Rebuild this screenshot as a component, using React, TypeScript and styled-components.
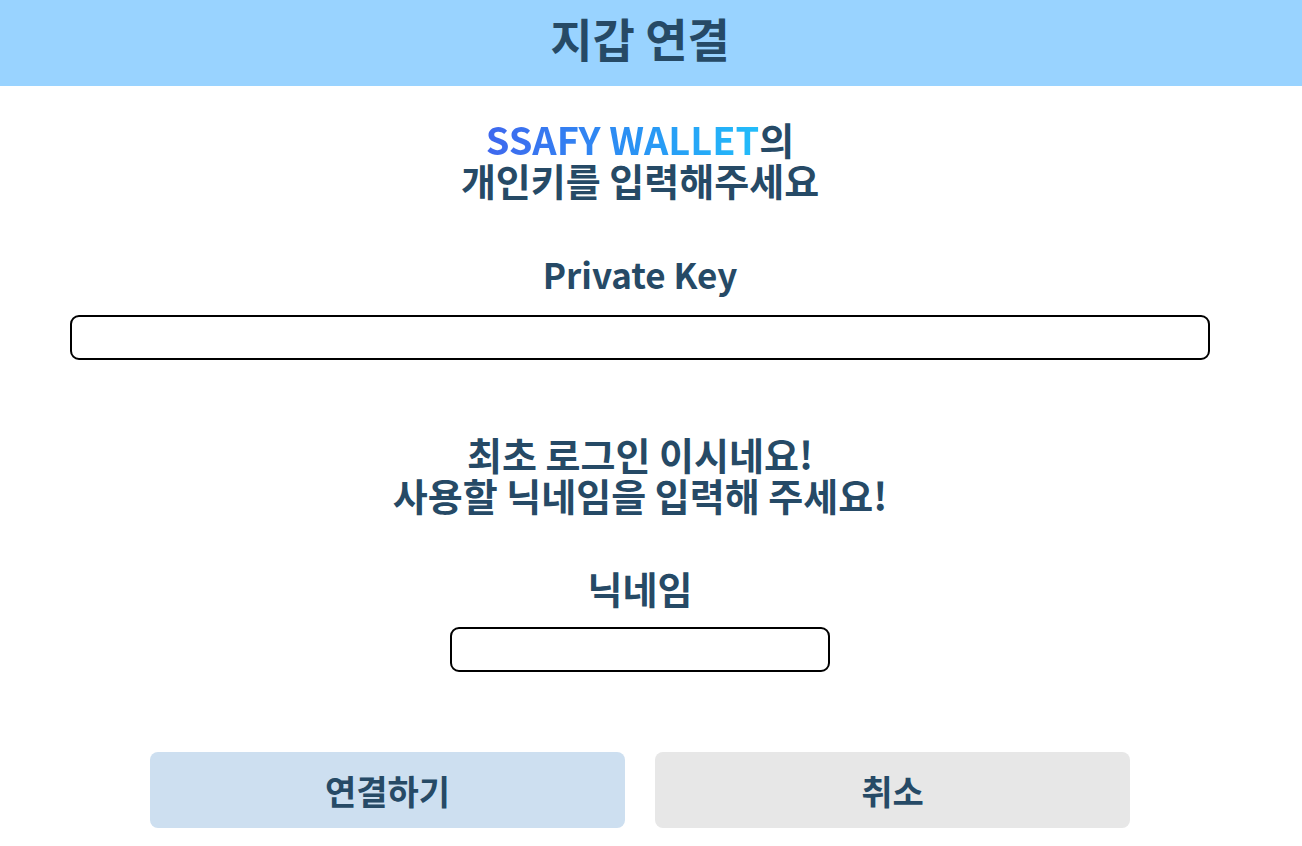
import React from "react";
import styled, { createGlobalStyle } from "styled-components";

const Global = createGlobalStyle`
  html, body { margin: 0; padding: 0; background: #ffffff; }
  body { font-family: "Noto Sans CJK KR", "Noto Sans", sans-serif; color: #264a66; }
  * { box-sizing: border-box; }
`;

const Header = styled.header`
  height: 86px;
  background: #99d3ff;
  width: 100%;
`;

const Frame = styled.div`
  width: 1280px;
  display: flex;
  flex-direction: column;
  align-items: center;
`;

const HeaderInner = styled(Frame)`
  height: 100%;
  justify-content: center;
  padding-bottom: 12px;
`;

const Title = styled.h1`
  margin: 0;
  font-size: 46px;
  font-weight: 700;
  color: #264a66;
  line-height: 1;
`;

const Main = styled(Frame)`
  padding-top: 32px;
`;

const Heading = styled.h2<{ $top?: number }>`
  margin: ${(p) => p.$top ?? 0}px 0 0;
  font-size: 38px;
  font-weight: 700;
  line-height: 41px;
  text-align: center;
  color: #264a66;
`;

const Gradient = styled.span`
  background: linear-gradient(90deg, #3f67ee 0%, #2a93f4 55%, #22bdfa 100%);
  -webkit-background-clip: text;
  background-clip: text;
  color: transparent;
`;

const Label = styled.label<{ $top: number; $size: number }>`
  margin-top: ${(p) => p.$top}px;
  font-size: ${(p) => p.$size}px;
  font-weight: 700;
  line-height: 40px;
  color: #264a66;
`;

const Input = styled.input<{ $width: number; $top: number }>`
  display: block;
  margin-top: ${(p) => p.$top}px;
  width: ${(p) => p.$width}px;
  height: 45px;
  border: 2px solid #000;
  border-radius: 9px;
  background: #fff;
  outline: none;
`;

const Buttons = styled.div`
  margin-top: 80px;
  display: flex;
  gap: 30px;
`;

const Button = styled.button<{ $bg: string }>`
  width: 475px;
  height: 76px;
  border: none;
  border-radius: 8px;
  background: ${(p) => p.$bg};
  font-family: "Noto Sans CJK KR", sans-serif;
  font-size: 34px;
  font-weight: 700;
  color: #264a66;
  padding: 0;
`;

export default function App() {
  return (
    <>
      <Global />
      <Header>
        <HeaderInner>
          <Title>지갑 연결</Title>
        </HeaderInner>
      </Header>
      <Main>
        <Heading>
          <Gradient>SSAFY WALLET</Gradient>의
          <br />
          개인키를 입력해주세요
        </Heading>
        <Label $top={54} $size={35}>
          Private Key
        </Label>
        <Input $width={1140} $top={21} />
        <Heading $top={73}>
          최초 로그인 이시네요!
          <br />
          사용할 닉네임을 입력해 주세요!
        </Heading>
        <Label $top={53} $size={38}>
          닉네임
        </Label>
        <Input $width={380} $top={19} />
        <Buttons>
          <Button $bg="#cddff0">연결하기</Button>
          <Button $bg="#e7e7e7">취소</Button>
        </Buttons>
      </Main>
    </>
  );
}
